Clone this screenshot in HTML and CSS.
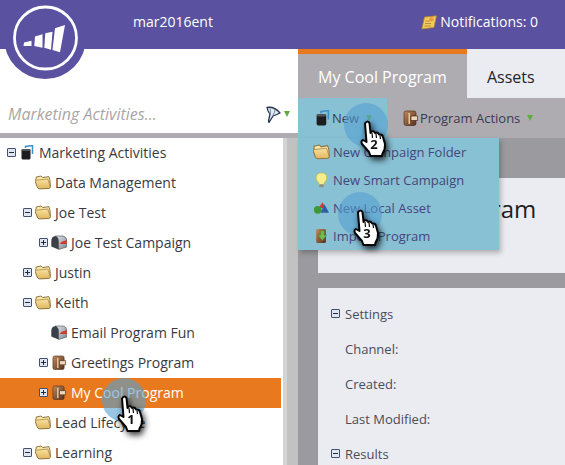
FILE: index.html
```html
<!DOCTYPE html>
<html lang="en">
<head>
    <meta charset="UTF-8">
    <title>Marketing Activities</title>
    <link rel="stylesheet" href="styles.css">
</head>
<body>
    <svg class="defs" width="0" height="0">
        <linearGradient id="folderFill" x1="0" y1="0" x2="0" y2="1"><stop offset="0" stop-color="#fdf0b8"/><stop offset="1" stop-color="#e2b65c"/></linearGradient>
        <linearGradient id="walletFill" x1="0" y1="0" x2="1" y2="1"><stop offset="0" stop-color="#c08a5e"/><stop offset="1" stop-color="#55301a"/></linearGradient>
        <linearGradient id="boxFill" x1="0" y1="0" x2="1" y2="1"><stop offset="0" stop-color="#e4e8ec"/><stop offset="1" stop-color="#7d858e"/></linearGradient>
        <symbol id="folder" viewBox="1 1 14.5 12.8">
            <path d="M2 4 L2 2.5 L6.5 1.5 L8 3 L13.5 2 L14.5 5 L15 11 Q15 12.5 13.5 12.8 L5 13.2 Q3.5 13 3 11.5 L1 6 Z" fill="url(#folderFill)" stroke="#8d7440" stroke-width=".9"/>
            <path d="M1.5 5.5 L12.5 4.2 L14.8 11" fill="none" stroke="#a98a4a" stroke-width=".7"/>
        </symbol>
        <symbol id="binder" viewBox="0 0 13 15">
            <path d="M5 3 L5 1.5 L12 .5 L12 9" fill="none" stroke="#3f8fc8" stroke-width="1.5"/>
            <rect x="1" y="4" width="9" height="10.5" rx="1.5" fill="#1d1d1f"/>
            <rect x="1" y="4" width="9" height="2" rx="1" fill="#55565a"/>
        </symbol>
        <symbol id="mailbox" viewBox="0 0 16 15">
            <path d="M4.5 1 H12 Q15.8 1.5 15.8 6 V12 L7.5 14.5 V6 Q7.5 2.5 4.5 1 Z" fill="url(#boxFill)" stroke="#555b63" stroke-width=".7"/>
            <path d="M4.5 1 Q.3 1.5 .3 6 V11.5 L7.5 14.5 V6 Q7.5 2.5 4.5 1 Z" fill="#3a4047"/>
            <path d="M8.5 9 Q11 5.5 13.5 6 L15.8 4.5 V9 Z" fill="#d23a2a"/>
        </symbol>
        <symbol id="wallet" viewBox="0 0 15 16">
            <rect x="1" y="1" width="12" height="14.5" rx="2" fill="url(#walletFill)" stroke="#4a2a14" stroke-width=".6"/>
            <path d="M8 6 H14.5 V10.5 H8 Z" fill="#ecd6bc" stroke="#4a2a14" stroke-width=".7"/>
            <rect x="5.5" y="3" width="1.5" height="11" fill="#e9c9a4"/>
        </symbol>
        <symbol id="hand" viewBox="0 0 30 38">
            <path d="M6 3.5 Q8 0 10.5 3 L11.5 13 L12.5 11.5 Q15 10.5 16 13 L16.8 12.8 Q19 12 20 14.5 L21 14.5 Q23.5 14.5 24 17 L26 24 Q26.5 29 23.5 33.5 L23 36 H11.5 L10 32 L3 24 Q1.5 21 4 20 L7.5 22 Z" fill="#fff" stroke="#050505" stroke-width="2" stroke-linejoin="round"/>
            <path d="M13 13 L13.5 18 M17 14 L17.5 18 M21 15.5 L21.5 19" stroke="#050505" stroke-width="1.2"/>
        </symbol>
    </svg>

    <div class="app">
        <header class="topbar">
            <span class="account">mar2016ent</span>
            <span class="notifications">
                <svg class="note-icon" viewBox="0 0 16 15"><path d="M3.5 2 L15.5 .8 L13 12.5 L.8 14 Z" fill="#f2c95c" stroke="#a9842c" stroke-width=".8"/><path d="M4.5 6 H9 M4 8.5 H10 M3.5 11 H10" stroke="#a58533" stroke-width=".8"/><circle cx="10.5" cy="4.2" r="2.2" fill="#ea9a45"/></svg>
                Notifications: 0
            </span>
        </header>

        <div class="main">
            <aside class="sidebar">
                <div class="search">
                    <span class="search-text">Marketing Activities...</span>
                    <svg class="filter-icon" viewBox="0 0 15 17"><path d="M1 1.5 Q8 0 14 7 Q10 9 7 10 L3 16.5 L2.5 15 L4 8 Q1.5 5 1 1.5 Z" fill="#e3e9f0" stroke="#26344e" stroke-width="1.3" stroke-linejoin="round"/><path d="M4 8 Q5 4 4 2.5 M7 9 Q9 6 9 4" fill="none" stroke="#6d829e" stroke-width="1"/></svg>
                    <span class="arrow"></span>
                </div>
                <div class="sidebar-rule"></div>
                <div class="tree-wrap">
                    <ul class="tree">
                        <li class="node"><span class="exp minus"></span><svg class="icon"><use href="#binder"/></svg>Marketing Activities</li>
                        <li class="node lvl1"><span class="exp none"></span><svg class="icon"><use href="#folder"/></svg>Data Management</li>
                        <li class="node lvl1"><span class="exp minus"></span><svg class="icon"><use href="#folder"/></svg>Joe Test</li>
                        <li class="node lvl2"><span class="exp plus"></span><svg class="icon"><use href="#mailbox"/></svg>Joe Test Campaign</li>
                        <li class="node lvl1"><span class="exp plus"></span><svg class="icon"><use href="#folder"/></svg>Justin</li>
                        <li class="node lvl1"><span class="exp minus"></span><svg class="icon"><use href="#folder"/></svg>Keith</li>
                        <li class="node lvl2"><span class="exp none"></span><svg class="icon"><use href="#mailbox"/></svg>Email Program Fun</li>
                        <li class="node lvl2"><span class="exp plus"></span><svg class="icon"><use href="#wallet"/></svg>Greetings Program</li>
                        <li class="node lvl2 selected"><span class="exp plus"></span><svg class="icon"><use href="#wallet"/></svg>My Cool Program</li>
                        <li class="node lvl1"><span class="exp none"></span><svg class="icon"><use href="#folder"/></svg>Lead Lifecycle</li>
                        <li class="node lvl1"><span class="exp minus"></span><svg class="icon"><use href="#folder"/></svg>Learning</li>
                    </ul>
                    <div class="scrollbar"></div>
                </div>
            </aside>

            <section class="content">
                <div class="tabs">
                    <div class="tab active">My Cool Program</div>
                    <div class="tab">Assets</div>
                </div>
                <div class="toolbar">
                    <div class="tool tool-new"><svg class="tool-icon"><use href="#binder"/></svg>New<span class="arrow"></span></div>
                    <div class="tool tool-actions"><svg class="tool-icon"><use href="#wallet"/></svg>Program Actions<span class="arrow"></span></div>
                </div>
                <div class="panels">
                    <div class="card title-card"><h1>My Cool Program</h1></div>
                    <div class="card settings-card">
                        <div class="group"><span class="exp minus"></span>Settings</div>
                        <div class="field">Channel:</div>
                        <div class="field">Created:</div>
                        <div class="field">Last Modified:</div>
                        <div class="group"><span class="exp minus"></span>Results</div>
                    </div>
                </div>
            </section>
        </div>
    </div>

    <ul class="menu">
        <li><svg class="menu-icon"><use href="#folder"/></svg>New Campaign Folder</li>
        <li><svg class="menu-icon" viewBox="0 0 16 18"><path d="M8 1 Q14 1 14 7 Q14 9.5 11 12 V14 H5 V12 Q2 9.5 2 7 Q2 1 8 1 Z" fill="#f7ee8a" stroke="#c9b94e" stroke-width=".8"/><rect x="5.5" y="14" width="5" height="3" fill="#8d8d80"/></svg>New Smart Campaign</li>
        <li><svg class="menu-icon" viewBox="0 0 18 14"><path d="M6 7 L10 1 L13 7 Z" fill="#d43a2e"/><path d="M12 3 L17 12 H8 Z" fill="#2f5fa8"/><circle cx="5" cy="9" r="4" fill="#3f9a36"/></svg>New Local Asset</li>
        <li><svg class="menu-icon" viewBox="0 0 16 18"><rect x="2" y="1" width="11" height="16" rx="1.5" fill="url(#walletFill)"/><path d="M7 3 H11 V8 H14 L9 14 L4 8 H7 Z" fill="#6fc04a" stroke="#3d8526" stroke-width=".5"/></svg>Import Program</li>
    </ul>

    <svg class="logo" viewBox="0 0 90 80">
        <circle cx="45" cy="38" r="41" fill="#5a52a0"/>
        <circle cx="45.5" cy="38" r="31" fill="none" stroke="#fff" stroke-width="2.8"/>
        <path d="M24 42.5 L31.5 40.8 V46 H23.5 Z M35 36.5 L42.5 34.3 V47.7 L34.3 46 Z M45.3 33.3 L52.5 31.7 L51 49.7 L44.3 47.7 Z M55 28.3 L65 25 L60 52.3 L52.5 50 Z" fill="#fff"/>
    </svg>

    <span class="pulse pulse-1"></span>
    <span class="pulse pulse-2"></span>
    <span class="pulse pulse-3"></span>

    <div class="pointer pointer-1"><svg class="hand"><use href="#hand"/></svg><span class="step">1</span></div>
    <div class="pointer pointer-2"><svg class="hand"><use href="#hand"/></svg><span class="step">2</span></div>
    <div class="pointer pointer-3"><svg class="hand"><use href="#hand"/></svg><span class="step">3</span></div>
</body>
</html>
```

FILE: styles.css
```css
* {
    box-sizing: border-box;
}

html, body {
    margin: 0;
    height: 100%;
    overflow: hidden;
}

body {
    position: relative;
    font-family: "Open Sans", "Liberation Sans", sans-serif;
    font-size: 13px;
    background-color: #fff;
}

ul {
    list-style: none;
    margin: 0;
    padding: 0;
}

.defs {
    position: absolute;
}

.app {
    display: flex;
    flex-direction: column;
    height: 465px;
}

.topbar {
    display: flex;
    justify-content: space-between;
    height: 49px;
    padding: 12px 27px 0 133px;
    background-color: #5a52a0;
    color: #fff;
    font-size: 14px;
    line-height: 20px;
}

.notifications {
    display: flex;
    align-items: center;
    gap: 3px;
    height: 20px;
}

.note-icon {
    width: 16px;
    height: 15px;
}

.main {
    display: flex;
    flex: 1;
    min-height: 0;
}

.sidebar {
    display: flex;
    flex-direction: column;
    width: 298px;
}

.search {
    display: flex;
    align-items: center;
    height: 84px;
    padding: 46px 8px 0 8px;
}

.search-text {
    flex: 1;
    font-size: 16px;
    font-style: italic;
    color: #a9a6a6;
}

.filter-icon {
    width: 15px;
    height: 17px;
    margin-right: 3px;
}

.arrow {
    display: inline-block;
    width: 0;
    height: 0;
    border-left: 3.5px solid transparent;
    border-right: 3.5px solid transparent;
    border-top: 6px solid #5fae3c;
}

.sidebar-rule {
    height: 5px;
    background-color: #aeacb0;
}

.tree-wrap {
    display: flex;
    flex: 1;
    min-height: 0;
}

.tree {
    width: 281px;
    margin-right: 2px;
}

.node {
    display: flex;
    align-items: center;
    height: 30px;
    padding: 0 0 2px 7px;
    font-size: 14px;
    color: #3a3a42;
    white-space: nowrap;
}

.lvl1 {
    padding-left: 23px;
}

.lvl2 {
    padding-left: 39px;
}

.selected {
    background-color: #e8791e;
    color: #fff;
}

.exp {
    position: relative;
    flex: none;
    width: 9px;
    height: 9px;
    border: 1px solid #44506e;
    border-radius: 1px;
    background-color: #dfe6f0;
}

.exp.none {
    border: none;
    background: none;
}

.exp.minus::before,
.exp.plus::before {
    content: "";
    position: absolute;
    left: 1px;
    top: 3px;
    width: 5px;
    height: 1px;
    background-color: #1f2a44;
}

.exp.plus::after {
    content: "";
    position: absolute;
    left: 3px;
    top: 1px;
    width: 1px;
    height: 5px;
    background-color: #1f2a44;
}

.icon {
    flex: none;
    width: 16px;
    height: 15px;
    margin: 0 4px 0 3px;
}

.scrollbar {
    flex: none;
    width: 15px;
    background-color: #c2c2c2;
    border-left: 4px solid #d4d4d4;
}

.content {
    display: flex;
    flex-direction: column;
    flex: 1;
    min-width: 0;
}

.tabs {
    display: flex;
    height: 49px;
}

.tab {
    flex: 1;
    padding: 15px 0 0 20px;
    font-size: 16px;
    line-height: 26px;
    color: #23232b;
    background-color: #ebebf2;
    white-space: nowrap;
}

.tab.active {
    flex: none;
    width: 169px;
    padding-top: 10px;
    border-top: 5px solid #e8791e;
    color: #fff;
    background-color: #aeacb0;
}

.toolbar {
    display: flex;
    height: 40px;
    background-color: #aeacb0;
    color: #3c3a55;
}

.tool {
    display: flex;
    align-items: center;
    padding-bottom: 1px;
}

.tool-new {
    width: 89px;
    padding-left: 17px;
    background-color: #88c0d4;
}

.tool-actions {
    padding-left: 16px;
}

.tool-icon {
    width: 15px;
    height: 16px;
    margin-right: 2px;
}

.tool .arrow {
    margin: 1px 0 0 7px;
}

.panels {
    display: flex;
    flex-direction: column;
    flex: 1;
    min-height: 0;
    gap: 15px;
    padding: 40px 0 0 20px;
    background-color: #9b9a9e;
}

.card {
    background-color: #ebebf2;
}

.title-card {
    flex: none;
    height: 95px;
    padding: 14px 0 0 25px;
}

.title-card h1 {
    margin: 0;
    font-size: 24px;
    font-weight: 400;
    line-height: 34px;
    color: #1d1d26;
    white-space: nowrap;
}

.settings-card {
    flex: 1;
    padding: 8px 0 0 13px;
    color: #4b4b57;
}

.group,
.field {
    display: flex;
    align-items: center;
    height: 35px;
}

.group .exp {
    margin-right: 5px;
}

.field {
    padding-left: 14px;
}

.menu {
    position: absolute;
    left: 298px;
    top: 138px;
    width: 201px;
    height: 112px;
    background-color: #88c0d4;
    box-shadow: 2px 3px 5px rgba(0, 0, 0, .25);
    color: #47467c;
}

.menu li {
    display: flex;
    align-items: center;
    height: 28px;
    padding-left: 15px;
}

.menu-icon {
    width: 17px;
    height: 16px;
    margin-right: 3px;
}

.logo {
    position: absolute;
    left: 0;
    top: 0;
    width: 90px;
    height: 80px;
}

.pulse {
    position: absolute;
    width: 44px;
    height: 44px;
    border-radius: 50%;
    background-color: rgba(85, 160, 210, .6);
}

.pulse-1 { left: 102px; top: 378px; }
.pulse-2 { left: 344px; top: 103px; }
.pulse-3 { left: 338px; top: 192px; }

.pointer {
    position: absolute;
    width: 30px;
    height: 38px;
    filter: drop-shadow(2px 3px 3px rgba(0, 0, 0, .8));
}

.pointer-1 { left: 116px; top: 395px; }
.pointer-2 { left: 359px; top: 120px; }
.pointer-3 { left: 352px; top: 209px; }

.hand {
    display: block;
    width: 30px;
    height: 38px;
}

.step {
    position: absolute;
    left: 9px;
    top: 15px;
    width: 12px;
    text-align: center;
    font-size: 13px;
    font-weight: 700;
    line-height: 18px;
    color: #111;
}
```
